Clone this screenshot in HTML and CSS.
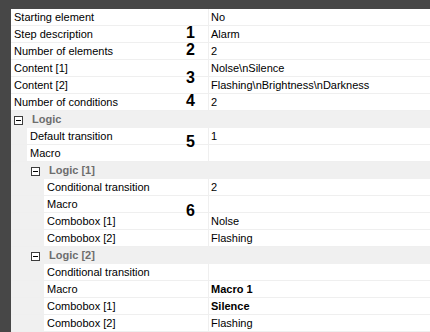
FILE: index.html
```html
<!DOCTYPE html>
<html>
<head>
<meta charset="utf-8">
<link rel="stylesheet" href="styles.css">
</head>
<body>
<div class="grid">
  <div class="row"><div class="gut l0"></div><div class="name">Starting element</div><div class="val">No</div></div>
  <div class="row"><div class="gut l0"></div><div class="name">Step description</div><div class="val">Alarm</div></div>
  <div class="row"><div class="gut l0"></div><div class="name">Number of elements</div><div class="val">2</div></div>
  <div class="row"><div class="gut l0"></div><div class="name">Content [1]</div><div class="val">Nolse\nSilence</div></div>
  <div class="row"><div class="gut l0"></div><div class="name">Content [2]</div><div class="val">Flashing\nBrightness\nDarkness</div></div>
  <div class="row"><div class="gut l0"></div><div class="name">Number of conditions</div><div class="val">2</div></div>
  <div class="row group"><div class="gut g0"><span class="exp"></span></div><div class="gname">Logic</div></div>
  <div class="row"><div class="gut l1"></div><div class="name">Default transition</div><div class="val">1</div></div>
  <div class="row"><div class="gut l1"></div><div class="name">Macro</div><div class="val"></div></div>
  <div class="row group"><div class="gut g1"><span class="exp"></span></div><div class="gname">Logic [1]</div></div>
  <div class="row"><div class="gut l2"></div><div class="name">Conditional transition</div><div class="val">2</div></div>
  <div class="row"><div class="gut l2"></div><div class="name">Macro</div><div class="val"></div></div>
  <div class="row"><div class="gut l2"></div><div class="name">Combobox [1]</div><div class="val">Nolse</div></div>
  <div class="row"><div class="gut l2"></div><div class="name">Combobox [2]</div><div class="val">Flashing</div></div>
  <div class="row group"><div class="gut g1"><span class="exp"></span></div><div class="gname">Logic [2]</div></div>
  <div class="row"><div class="gut l2"></div><div class="name">Conditional transition</div><div class="val"></div></div>
  <div class="row"><div class="gut l2"></div><div class="name">Macro</div><div class="val bold">Macro 1</div></div>
  <div class="row"><div class="gut l2"></div><div class="name">Combobox [1]</div><div class="val bold">Silence</div></div>
  <div class="row"><div class="gut l2"></div><div class="name">Combobox [2]</div><div class="val">Flashing</div></div>

  <span class="num n1">1</span>
  <span class="num n2">2</span>
  <span class="num n3">3</span>
  <span class="num n4">4</span>
  <span class="num n5">5</span>
  <span class="num n6">6</span>
</div>
</body>
</html>
```
FILE: styles.css
```css
html, body {
  margin: 0;
  padding: 0;
  background: #474747;
  width: 430px;
  height: 332px;
  overflow: hidden;
}
.grid {
  position: relative;
  margin: 9px 0 0 11px;
  background: #ffffff;
  font-family: "Liberation Sans", Arial, sans-serif;
  font-size: 11px;
  color: #000;
}
.row {
  display: flex;
  height: 16px;
  border-bottom: 1px solid #efefef;
  line-height: 16px;
  background: #fff;
}
.gut {
  flex: none;
  background: #f0f0f0;
  position: relative;
}
.gut.l0 { width: 0; }
.gut.l1 { width: 16px; }
.gut.l2 { width: 33px; }
.gut.g0 { width: 18px; background: transparent; }
.gut.g1 { width: 35px; background: transparent; }
.name {
  flex: none;
  box-sizing: border-box;
  padding-left: 3px;
  border-right: 1px solid #efefef;
  white-space: nowrap;
  overflow: hidden;
}
.gut.l0 + .name { width: 198px; }
.gut.l1 + .name { width: 182px; }
.gut.l2 + .name { width: 165px; }
.val {
  flex: 1;
  padding-left: 2px;
  white-space: nowrap;
}
.bold { font-weight: bold; }
.group {
  background: #f0f0f0;
  border-bottom-color: #f0f0f0;
}
.gname {
  font-weight: bold;
  color: #6d6d6d;
  padding-left: 3px;
}
.exp {
  position: absolute;
  right: 6px;
  top: 5px;
  width: 7px;
  height: 7px;
  border: 1px solid #3c3c3c;
  background: #fff;
}
.exp::after {
  content: "";
  position: absolute;
  left: 1px;
  top: 3px;
  width: 5px;
  height: 1px;
  background: #000;
}
.num {
  position: absolute;
  font-family: "Liberation Sans", Arial, sans-serif;
  font-weight: bold;
  font-size: 16px;
  line-height: 12px;
  color: #000;
}
.n1 { left: 175px; top: 18px; }
.n2 { left: 175px; top: 35px; }
.n3 { left: 175px; top: 63px; }
.n4 { left: 175px; top: 86px; }
.n5 { left: 175px; top: 127px; }
.n6 { left: 175px; top: 196px; }
```
